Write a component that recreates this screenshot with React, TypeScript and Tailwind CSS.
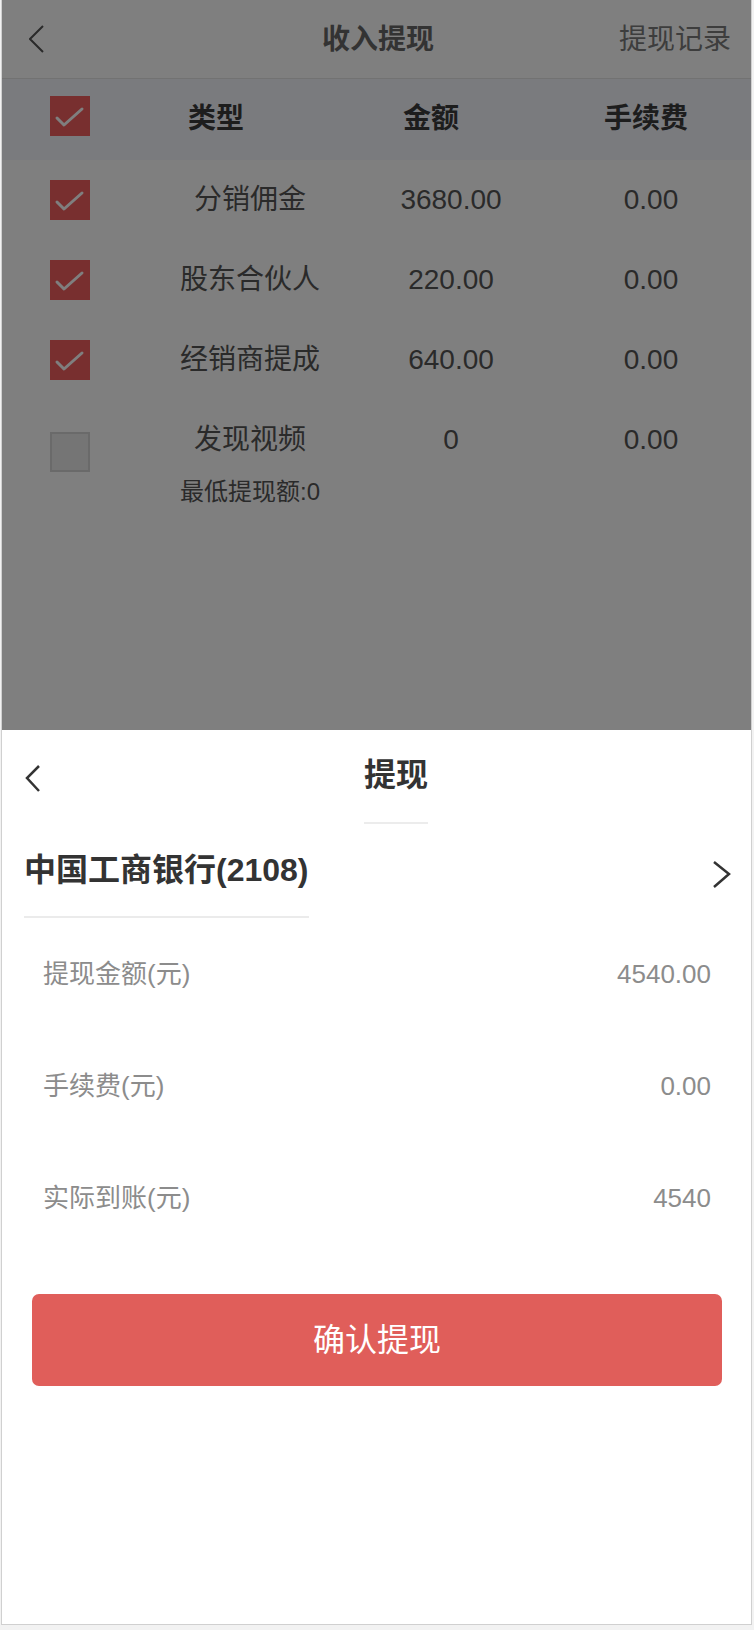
import React from 'react';

interface Income {
  type: string;
  amount: string;
  fee: string;
  checked: boolean;
  min?: string;
}

const INCOMES: Income[] = [
  { type: '分销佣金', amount: '3680.00', fee: '0.00', checked: true },
  { type: '股东合伙人', amount: '220.00', fee: '0.00', checked: true },
  { type: '经销商提成', amount: '640.00', fee: '0.00', checked: true },
  { type: '发现视频', amount: '0', fee: '0.00', checked: false, min: '最低提现额:0' },
];

const SUMMARY = [
  { label: '提现金额(元)', value: '4540.00' },
  { label: '手续费(元)', value: '0.00' },
  { label: '实际到账(元)', value: '4540' },
];

const CheckBox: React.FC<{ checked: boolean }> = ({ checked }) =>
  checked ? (
    <div className="w-[40px] h-[40px] shrink-0 bg-[#f05e5e]">
      <svg width="40" height="40" viewBox="0 0 40 40" fill="none">
        <polyline points="7,22 14,29 32,13" stroke="#ffffff" strokeWidth="3" strokeLinecap="round" strokeLinejoin="round" />
      </svg>
    </div>
  ) : (
    <div className="w-[40px] h-[40px] shrink-0 bg-[#ebebeb] border-2 border-[#d4d4d4]" />
  );

const App: React.FC = () => {
  return (
    <div className="min-h-[1630px] bg-[#f2f2f2] font-['Liberation_Sans','Noto_Sans_CJK_SC',sans-serif]">
      <div className="relative ml-[1px] w-[751px] h-[1625px] bg-white border-x border-b border-[#d0d0d0] overflow-hidden">
        {/* Nav */}
        <div className="h-[79px] flex items-center border-b border-[#e5e5e5] pl-[27px] pr-[20px]">
          <div className="w-[160px]">
            <svg width="16" height="30" viewBox="0 0 16 30" fill="none">
              <polyline points="14,2 1,15 14,28" stroke="#555" strokeWidth="2" />
            </svg>
          </div>
          <div className="flex-1 text-center text-[28px] font-bold text-[#666] leading-none pt-[2px] pr-[4px]">收入提现</div>
          <div className="w-[160px] text-right text-[28px] text-[#7a7a7a] leading-none pt-[2px]">提现记录</div>
        </div>

        {/* Table head */}
        <div className="h-[81px] flex items-start bg-[#f4f6fd] pl-[48px]">
          <div className="mt-[17px]">
            <CheckBox checked />
          </div>
          <div className="ml-[46px] w-[160px] text-center text-[28px] font-bold text-[#3a3a3a] leading-[80px]">类型</div>
          <div className="ml-[55px] w-[160px] text-center text-[28px] font-bold text-[#3a3a3a] leading-[80px]">金额</div>
          <div className="ml-[55px] w-[160px] text-center text-[28px] font-bold text-[#3a3a3a] leading-[80px]">手续费</div>
        </div>

        {/* Rows */}
        {INCOMES.map((row, i) => (
          <div key={i} className="flex items-start pl-[48px] text-[28px] text-[#555]">
            <div className={row.min ? 'mt-[32px]' : 'mt-[20px]'}>
              <CheckBox checked={row.checked} />
            </div>
            <div className="ml-[70px] w-[180px] text-center">
              <div className="leading-[80px]">{row.type}</div>
              {row.min && <div className="text-[24px] leading-[24px]">{row.min}</div>}
            </div>
            <div className="ml-[21px] w-[180px] text-center leading-[80px]">{row.amount}</div>
            <div className="ml-[20px] w-[180px] text-center leading-[80px]">{row.fee}</div>
          </div>
        ))}

        {/* Mask */}
        <div className="absolute inset-0 bg-black/50" />

        {/* Withdraw sheet */}
        <div className="absolute left-0 right-0 bottom-0 h-[894px] bg-white">
          <div className="flex items-start pt-[25px]">
            <div className="w-[39px] shrink-0 pl-[22px] pt-[9px]">
              <svg width="17" height="30" viewBox="0 0 17 30" fill="none">
                <polyline points="15,2 3,14 15,27" stroke="#333" strokeWidth="2.5" />
              </svg>
            </div>
            <div className="flex-1 flex justify-center">
              <div className="text-[32px] font-bold text-[#333] leading-[40px] pb-[27px] border-b-2 border-[#ececec]">提现</div>
            </div>
          </div>

          <div className="flex items-start justify-between pl-[22px] pr-[20px] mt-[24px]">
            <div className="text-[32px] font-bold text-[#333] leading-[44px] pb-[24px] border-b-2 border-[#ebebeb]">
              中国工商银行(2108)
            </div>
            <svg className="mt-[12px]" width="19" height="30" viewBox="0 0 19 30" fill="none">
              <polyline points="2,2 17,14 2,27" stroke="#333" strokeWidth="2.5" />
            </svg>
          </div>

          {SUMMARY.map((s) => (
            <div key={s.label} className="h-[112px] flex items-center justify-between pl-[41px] pr-[40px] text-[26px] text-[#8c8c8c]">
              <span>{s.label}</span>
              <span>{s.value}</span>
            </div>
          ))}

          <button className="mt-[40px] mx-[30px] w-[690px] h-[92px] rounded-[7px] bg-[#e05e5a] text-white text-[32px] flex items-center justify-center">
            确认提现
          </button>
        </div>
      </div>
    </div>
  );
};

export default App;
